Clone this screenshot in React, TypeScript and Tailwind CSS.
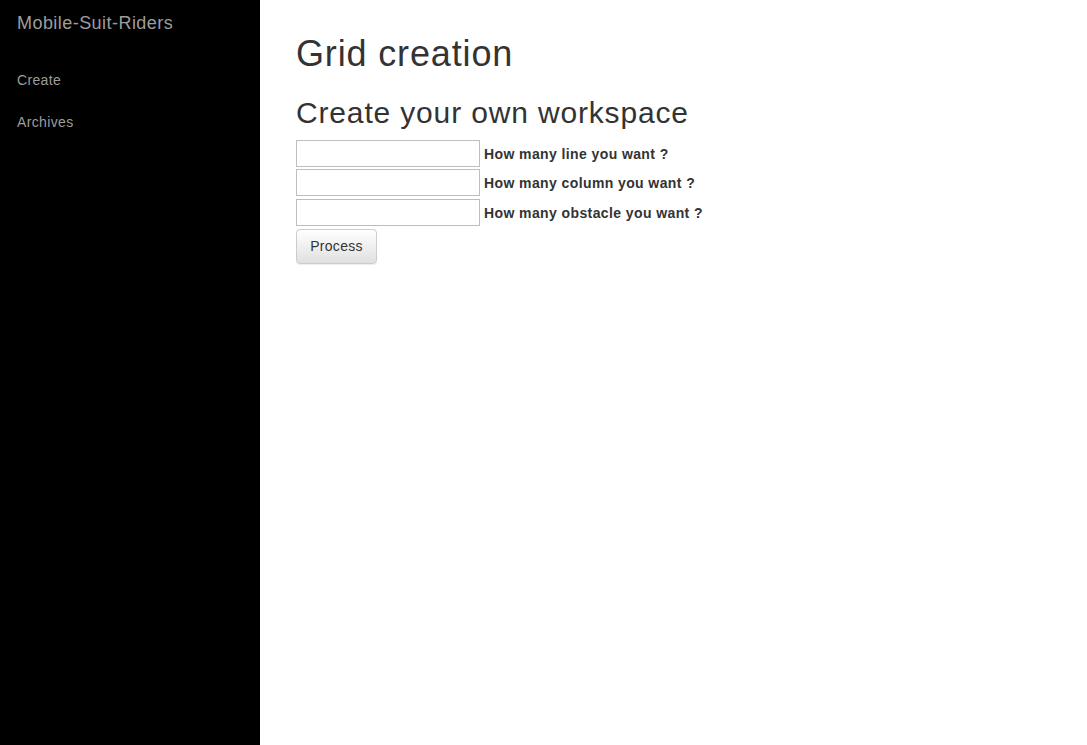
import React from 'react';

const fields = [
  'How many line you want ?',
  'How many column you want ?',
  'How many obstacle you want ?',
];

export default function App() {
  return (
    <div className="flex min-h-[745px] bg-white font-['Liberation_Sans',Arial,sans-serif] text-[14px] text-[#333]">
      <aside className="w-[260px] shrink-0 bg-black">
        <div className="px-[17px] pt-[13px] text-[18px] leading-[20px] tracking-[0.45px] text-[#9d9d9d]">
          Mobile-Suit-Riders
        </div>
        <nav className="mt-[26px] flex flex-col">
          <a className="px-[17px] py-[11px] leading-[20px] tracking-[0.35px] text-[#9d9d9d]">Create</a>
          <a className="px-[17px] py-[11px] leading-[20px] tracking-[0.35px] text-[#9d9d9d]">Archives</a>
        </nav>
      </aside>

      <main className="flex-1 pl-[36px] pt-[34px]">
        <h1 className="text-[36px] leading-[39.6px] font-normal tracking-[0.85px]">Grid creation</h1>
        <h2 className="mt-[22px] text-[30px] leading-[33px] font-normal tracking-[0.84px]">
          Create your own workspace
        </h2>

        <form className="mt-[11px] flex flex-col gap-[2.8px]">
          {fields.map((label) => (
            <div key={label} className="flex h-[27px] items-center">
              <input
                type="text"
                className="h-[27px] w-[184px] border border-[#bdbdbd] bg-white px-1 outline-none"
              />
              <label className="ml-[4px] mt-[2px] font-bold tracking-[0.4px]">{label}</label>
            </div>
          ))}
          <div>
            <button
              type="button"
              className="h-[35px] w-[81px] rounded-[4px] border border-[#ccc] bg-gradient-to-b from-white to-[#e0e0e0] text-[14px] tracking-[0.3px] text-[#333] shadow-[0_1px_1px_rgba(0,0,0,0.075)]"
            >
              Process
            </button>
          </div>
        </form>
      </main>
    </div>
  );
}
